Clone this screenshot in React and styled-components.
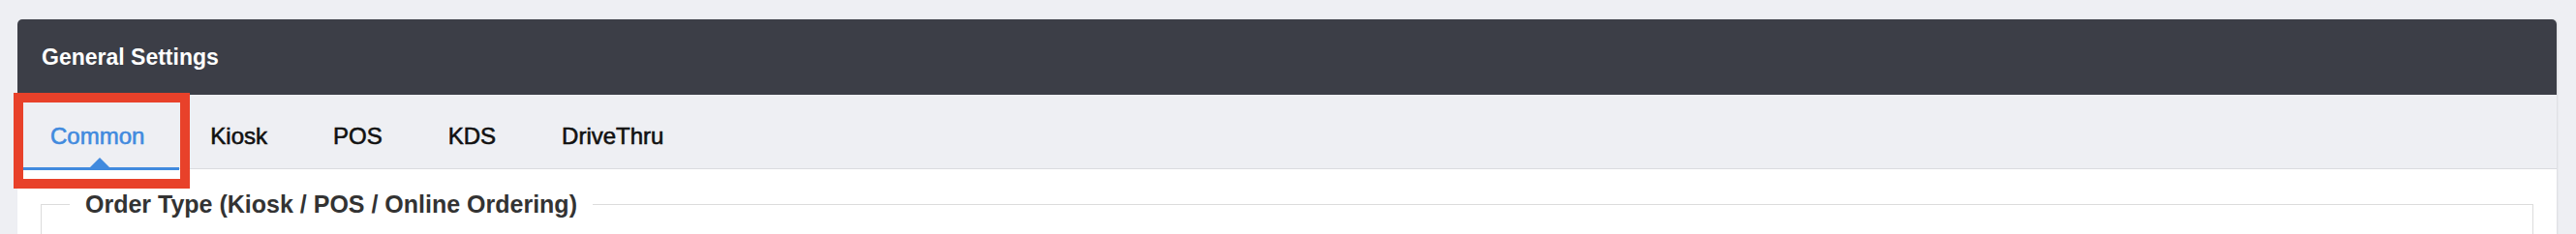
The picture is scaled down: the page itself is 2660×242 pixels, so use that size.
import React, { useState } from "react";
import styled, { createGlobalStyle } from "styled-components";

const GlobalStyle = createGlobalStyle`
  html, body {
    margin: 0;
    padding: 0;
    background: #eeeff3;
    font-family: "Liberation Sans", Arial, sans-serif;
  }
`;

const Page = styled.div`
  padding: 20px 20px 0 18px;
`;

const Card = styled.section`
  background: #fff;
  border-radius: 5px 5px 0 0;
  box-shadow: 1px 0 2px rgba(0, 0, 0, 0.08);
`;

const Header = styled.header`
  height: 78px;
  display: flex;
  align-items: center;
  padding: 0 25px;
  background: #3c3e47;
  border-radius: 5px 5px 0 0;
  color: #fff;
  font-size: 23px;
  font-weight: 700;
`;

const TabBar = styled.nav`
  display: flex;
  box-sizing: border-box;
  height: 77px;
  padding-top: 9px;
  background: #eeeff3;
  border-bottom: 1px solid #dadbdf;
`;

const Tab = styled.div`
  position: relative;
  display: flex;
  align-items: center;
  padding: 0 34px;
  font-size: 24px;
  color: ${(p) => (p.$active ? "#418ade" : "#111")};
  -webkit-text-stroke: 0.6px ${(p) => (p.$active ? "#418ade" : "#111")};
  cursor: pointer;

  ${(p) =>
    p.$active &&
    `
    &::after {
      content: "";
      position: absolute;
      left: 6px;
      right: -2px;
      bottom: -2px;
      height: 3px;
      background: #418ade;
    }
    &::before {
      content: "";
      position: absolute;
      left: calc(50% + 2px);
      bottom: 1px;
      margin-left: -10px;
      border-left: 10px solid transparent;
      border-right: 10px solid transparent;
      border-bottom: 10px solid #418ade;
    }
  `}
`;

const Highlight = styled.span`
  position: absolute;
  left: -4px;
  top: -11px;
  width: 182px;
  height: 99px;
  box-sizing: border-box;
  border: 10px solid #e8412a;
  pointer-events: none;
`;

const Body = styled.div`
  padding: 22px 24px 0 24px;
`;

const Group = styled.fieldset`
  margin: 0;
  padding: 0 29px 20px;
  height: 120px;
  border: 1px solid #dcdcdc;
`;

const Legend = styled.legend`
  padding: 0 16px;
  font-size: 25px;
  font-weight: 700;
  color: #333;
`;

const tabs = ["Common", "Kiosk", "POS", "KDS", "DriveThru"];

export default function App() {
  const [active, setActive] = useState("Common");
  return (
    <Page>
      <GlobalStyle />
      <Card>
        <Header>General Settings</Header>
        <TabBar>
          {tabs.map((t) => (
            <Tab key={t} $active={t === active} onClick={() => setActive(t)}>
              {t}
              {t === "Common" && <Highlight />}
            </Tab>
          ))}
        </TabBar>
        <Body>
          <Group>
            <Legend>Order Type (Kiosk / POS / Online Ordering)</Legend>
          </Group>
        </Body>
      </Card>
    </Page>
  );
}
